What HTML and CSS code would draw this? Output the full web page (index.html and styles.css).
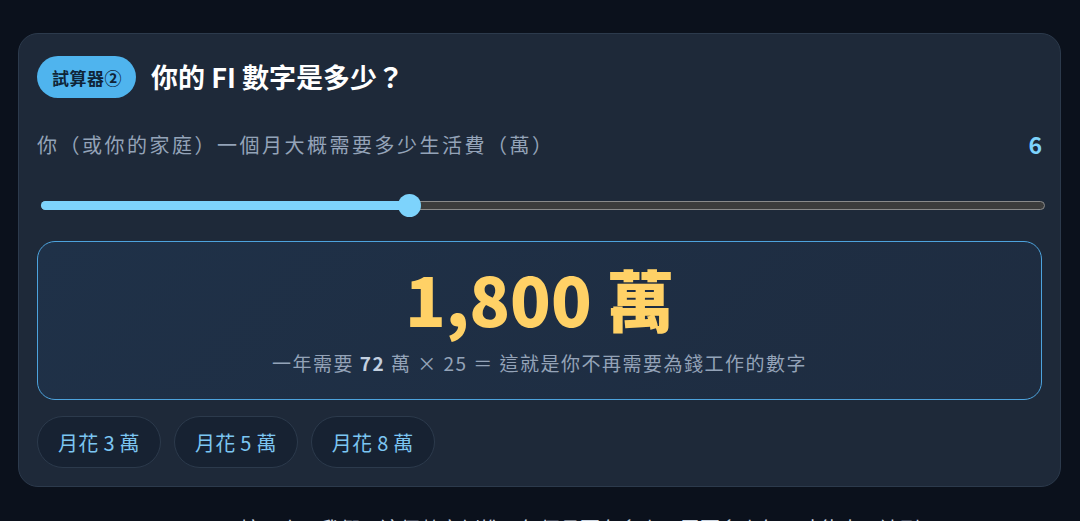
FILE: index.html
```html
<!DOCTYPE html>
<html lang="zh-Hant">
<head>
<meta charset="utf-8">
<title>FI 試算器</title>
<link rel="stylesheet" href="styles.css">
</head>
<body>
<main class="page">
  <section class="card">
    <header class="card-head">
      <span class="badge">試算器②</span>
      <h2 class="title">你的 FI 數字是多少？</h2>
    </header>
    <div class="field">
      <label class="field-label">你（或你的家庭）一個月大概需要多少生活費（萬）</label>
      <span class="field-value">6</span>
    </div>
    <div class="slider">
      <div class="track">
        <div class="fill" style="width: 36.65%"></div>
        <div class="thumb" style="left: 36.65%"></div>
      </div>
    </div>
    <div class="result">
      <div class="result-num">1,800 萬</div>
      <div class="result-note">一年需要 <b>72</b> 萬 × 25 ＝ 這就是你不再需要為錢工作的數字</div>
    </div>
    <div class="chips">
      <button class="chip">月花 3 萬</button>
      <button class="chip">月花 5 萬</button>
      <button class="chip">月花 8 萬</button>
    </div>
  </section>
  <p class="next">接下來，我們用這個數字倒推：每個月要存多少、需要多少年，才能真正達到。</p>
</main>
</body>
</html>
```
FILE: styles.css
```css
* { box-sizing: border-box; }
html, body { margin: 0; padding: 0; }
body {
  background: #0b111c;
  font-family: "Noto Sans CJK TC", "Noto Sans", sans-serif;
  color: #e2e8f0;
  height: 521px;
  overflow: hidden;
}
.page {
  padding: 33px 19px 0 18px;
}
.card {
  background: #1e2939;
  border: 1px solid #2c3a4c;
  border-radius: 20px;
  padding: 22px 18px 18px 18px;
}
.card-head {
  display: flex;
  align-items: center;
  gap: 15px;
}
.badge {
  display: inline-flex;
  align-items: center;
  height: 42px;
  padding: 0 14px 0 15px;
  border-radius: 21px;
  background: #4fb4ee;
  color: #0f2437;
  font-weight: 700;
  font-size: 17px;
  letter-spacing: 0.5px;
}
.title {
  margin: 0;
  font-size: 27px;
  font-weight: 700;
  color: #ffffff;
  line-height: 1.2;
}
.field {
  display: flex;
  justify-content: space-between;
  align-items: center;
  margin-top: 29px;
}
.field-label {
  font-size: 20px;
  color: #94a3b8;
  letter-spacing: 2.5px;
}
.field-value {
  font-size: 23px;
  font-weight: 700;
  color: #7dd3fc;
}
.slider {
  padding: 40px 0 31px;
}
.track {
  position: relative;
  height: 9px;
  margin: 0 -3px 0 4px;
  background: #3c3c3c;
  border: 1px solid #8a8a8a;
  border-radius: 5px;
}
.fill {
  position: absolute;
  left: -1px;
  top: -1px;
  bottom: -1px;
  background: #7dd3fc;
  border-radius: 5px 0 0 5px;
}
.thumb {
  position: absolute;
  top: 50%;
  width: 23px;
  height: 23px;
  margin: -11.5px 0 0 -11.5px;
  border-radius: 50%;
  background: #7dd3fc;
}
.result {
  border: 1px solid #4da3dd;
  border-radius: 18px;
  background: linear-gradient(135deg, #1f3148 0%, #1e2c40 100%);
  padding: 16px 20px 24px;
  text-align: center;
}
.result-num {
  font-size: 67px;
  font-weight: 900;
  color: #ffd166;
  line-height: 80px;
}
.result-note {
  font-size: 19px;
  color: #94a3b8;
  margin-top: 13px;
  line-height: 24px;
  letter-spacing: 1.5px;
}
.result-note b {
  color: #c3d0e0;
  font-weight: 700;
}
.chips {
  display: flex;
  gap: 13px;
  margin-top: 16px;
}
.chip {
  height: 52px;
  padding: 0 20px;
  border-radius: 26px;
  border: 1px solid #2c3a4c;
  background: #172232;
  color: #7cc6f2;
  font-family: inherit;
  font-size: 20px;
  letter-spacing: 0.3px;
}
.next {
  margin: 27px 0 0;
  padding: 0 40px 0 222px;
  font-size: 20px;
  color: #cbd5e1;
  line-height: 30px;
  white-space: nowrap;
}
```
